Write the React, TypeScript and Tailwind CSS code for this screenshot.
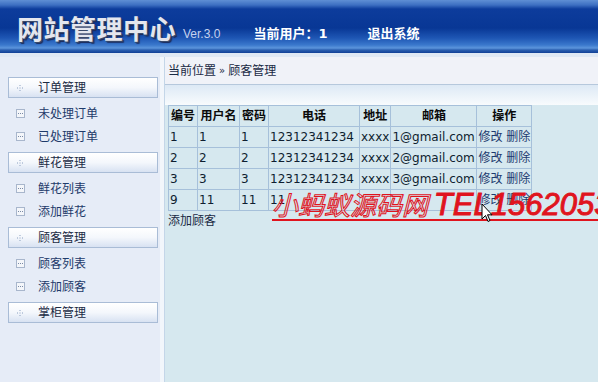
import React from "react";

const CJK = '"DejaVu Sans", "Noto Sans CJK SC", sans-serif';

function GroupIcon() {
  return (
    <svg width="6" height="6" viewBox="0 0 6 6" className="shrink-0">
      <rect x="2.5" y="0" width="1" height="1" fill="#8aa0c0" />
      <rect x="0" y="2.5" width="1" height="1" fill="#8aa0c0" />
      <rect x="2.5" y="2.5" width="1" height="1" fill="#8aa0c0" />
      <rect x="5" y="2.5" width="1" height="1" fill="#8aa0c0" />
      <rect x="2.5" y="5" width="1" height="1" fill="#8aa0c0" />
    </svg>
  );
}

function ItemIcon() {
  return (
    <svg width="9" height="9" viewBox="0 0 9 9" className="shrink-0">
      <rect x="0.5" y="0.5" width="8" height="8" fill="#f4f6fa" stroke="#a8b6cc" />
      <rect x="2" y="4" width="1" height="1" fill="#7a8aa6" />
      <rect x="4" y="4" width="1" height="1" fill="#7a8aa6" />
      <rect x="6" y="4" width="1" height="1" fill="#7a8aa6" />
    </svg>
  );
}

function Section({ title, items }: { title: string; items: string[] }) {
  return (
    <div>
      <div className="ml-[8px] w-[150px] h-[21px] flex items-center border border-[#a9bcd6] bg-gradient-to-b from-[#ffffff] via-[#f4f7fc] to-[#d8e2f2]">
        <div className="w-[29px] pl-[8px] flex items-center">
          <GroupIcon />
        </div>
        <span className="text-[12px] text-[#1a2a44]">{title}</span>
      </div>
      {items.length > 0 && (
        <div className="py-[4px]">
          {items.map((it) => (
            <div key={it} className="h-[23px] flex items-center">
              <div className="w-[38px] pl-[16px] flex items-center">
                <ItemIcon />
              </div>
              <span className="text-[12px] text-[#1e3a6a]">{it}</span>
            </div>
          ))}
        </div>
      )}
    </div>
  );
}

const rows = [
  ["1", "1", "1", "12312341234", "xxxx", "1@gmail.com"],
  ["2", "2", "2", "12312341234", "xxxx", "2@gmail.com"],
  ["3", "3", "3", "12312341234", "xxxx", "3@gmail.com"],
  ["9", "11", "11", "11", "", ""],
];

const widths = ["w-[29px]", "w-[42px]", "w-[29px]", "w-[91px]", "w-[31px]", "w-[86px]", "w-[54px]"];

export default function App() {
  return (
    <div
      className="w-[598px] h-[382px] overflow-hidden relative bg-[#e6ecf7] flex flex-col"
      style={{ fontFamily: CJK }}
    >
      {/* Header */}
      <div className="h-[53px] shrink-0 flex items-end pb-[8px] bg-[linear-gradient(to_bottom,#5f8fd4_0px,#3d6fc2_5px,#0d3c9c_9px,#083795_28px,#1e56b4_38px,#3a78cc_45px,#5c95dc_48px,#2a5fb0_50px,#103f96_53px)]">
        <div className="pl-[17px] flex items-end">
          <span
            className="text-[26px] leading-[30px] font-bold text-[#e4e6ee] tracking-[0.5px]"
            style={{ textShadow: "1px 1px 0 #3a4a6a, 2px 2px 1px #1a2a5a" }}
          >
            网站管理中心
          </span>
          <span className="ml-[7px] mb-[2px] text-[12px] text-[#c6d2ee]" style={{ fontFamily: '"Liberation Sans", sans-serif' }}>
            Ver.3.0
          </span>
          <span className="ml-[33px] mb-[2px] text-[13px] font-bold text-white">当前用户：1</span>
          <span className="ml-[40px] mb-[2px] text-[13px] font-bold text-white">退出系统</span>
        </div>
      </div>
      <div className="h-[4px] shrink-0 bg-[#dfe8f4]" />

      <div className="flex flex-1 min-h-0">
        {/* Sidebar */}
        <div className="w-[160px] shrink-0 pt-[20px] flex flex-col bg-[#e6ecf7]">
          <Section title="订单管理" items={["未处理订单", "已处理订单"]} />
          <Section title="鲜花管理" items={["鲜花列表", "添加鲜花"]} />
          <Section title="顾客管理" items={["顾客列表", "添加顾客"]} />
          <Section title="掌柜管理" items={[]} />
        </div>
        <div className="w-[4px] shrink-0 bg-[#f2f6fb]" />
        <div className="w-[1px] shrink-0 bg-[#c4d6e8]" />

        {/* Content */}
        <div className="flex-1 flex flex-col bg-[#d6e8ef]">
          <div className="h-[28px] shrink-0 flex items-center pl-[3px] bg-[#f0f2f8] border-b border-[#b6c8dc] text-[12px] text-[#1a2a44]">
            当前位置 <span className="mx-[3px] text-[10px]">»</span> 顾客管理
          </div>
          <div className="h-[20px] shrink-0 bg-gradient-to-b from-[#dde9f5] to-[#f8fbfd]" />
          <div className="pl-[3px]">
            <table className="border-collapse table-fixed text-[12px] text-[#0e1e30]">
              <thead>
                <tr className="h-[21px]">
                  {["编号", "用户名", "密码", "电话", "地址", "邮箱", "操作"].map((h, i) => (
                    <th
                      key={h}
                      className={`${widths[i]} border border-[#a6c0da] font-bold text-center p-0 text-[12px] text-[#0a0a0a] whitespace-nowrap overflow-hidden`}
                    >
                      {h}
                    </th>
                  ))}
                </tr>
              </thead>
              <tbody>
                {rows.map((r, ri) => (
                  <tr key={ri} className="h-[21px]">
                    {r.map((c, ci) => (
                      <td key={ci} className="border border-[#a6c0da] px-[1px] whitespace-nowrap overflow-hidden font-normal">
                        {c}
                      </td>
                    ))}
                    <td className="border border-[#a6c0da] px-[1px] whitespace-nowrap overflow-hidden text-[#1c3a6e]">修改 删除</td>
                  </tr>
                ))}
              </tbody>
            </table>
            <div className="text-[12px] leading-[18px] text-[#1a2a44] mt-[1px]">添加顾客</div>
          </div>
        </div>
      </div>

      {/* Watermark overlay */}
      <div
        className="absolute left-[272px] top-[187px] whitespace-nowrap italic text-[26px] leading-[34px] text-transparent"
        style={{ WebkitTextStroke: "1px #e0141e", fontFamily: '"Noto Sans CJK SC", sans-serif' }}
      >
        小蚂蚁源码网{" "}
        <span className="text-[#e0141e] text-[31px]" style={{ fontFamily: '"Liberation Sans", sans-serif' }}>
          TEL15620533
        </span>
      </div>
      <div className="absolute left-[272px] top-[219px] w-[330px] h-[2px] bg-[#e0141e]" />

      {/* Cursor */}
      <svg className="absolute left-[481px] top-[203px]" width="12" height="20" viewBox="0 0 12 20">
        <path d="M1 1 L1 16 L4.5 12.5 L7 18.5 L9 17.5 L6.5 11.8 L11 11.8 Z" fill="#fff" stroke="#000" strokeWidth="1" />
      </svg>
    </div>
  );
}
